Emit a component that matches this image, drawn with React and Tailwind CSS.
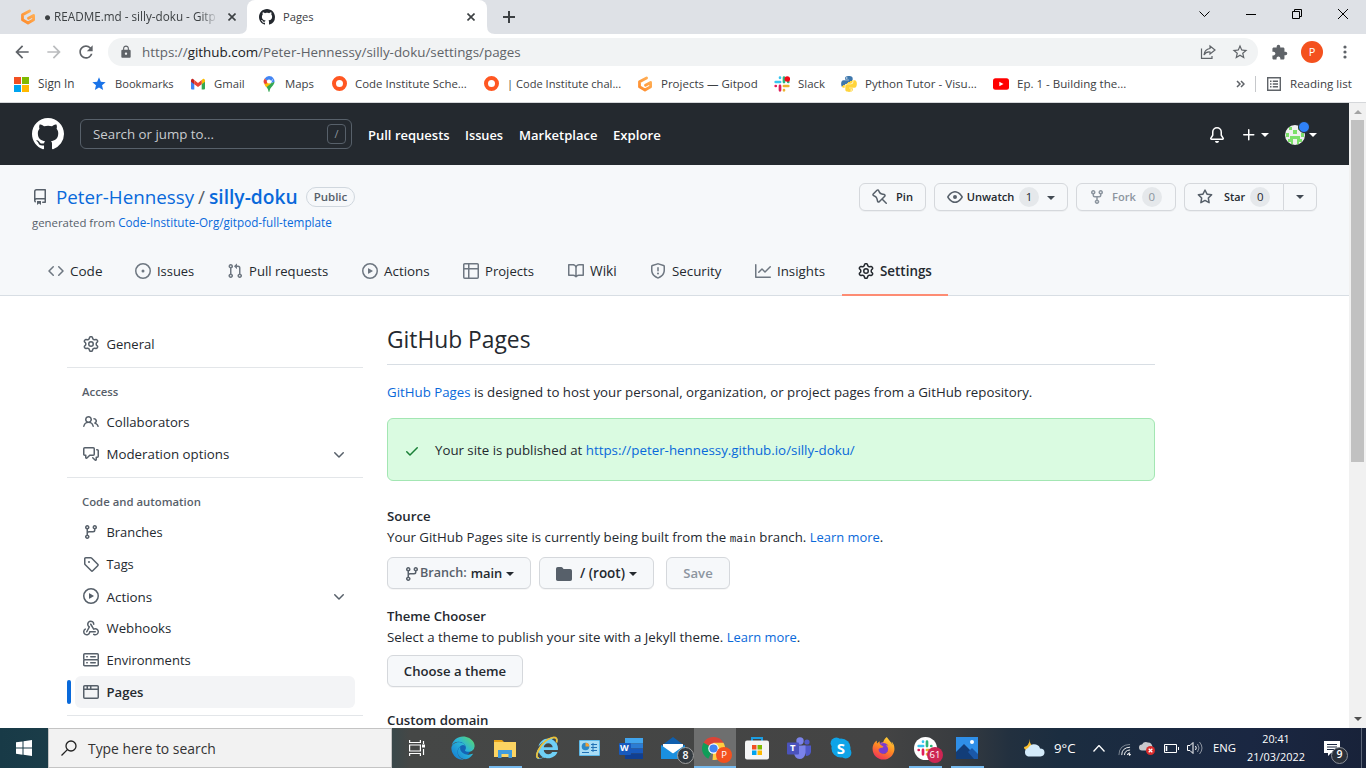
import { FaPython, FaFirefoxBrowser, FaInternetExplorer, FaEdge } from "react-icons/fa";
import { MdExtension, MdLock, MdRefresh, MdStar, MdStarBorder, MdArrowBack, MdArrowForward } from "react-icons/md";

const ICONS = {
  code: ["M4.72 3.22a.75.75 0 011.06 1.06L2.06 8l3.72 3.72a.75.75 0 11-1.06 1.06L.47 8.53a.75.75 0 010-1.06l4.25-4.25zm6.56 0a.75.75 0 10-1.06 1.06L13.94 8l-3.72 3.72a.75.75 0 101.06 1.06l4.25-4.25a.75.75 0 000-1.06l-4.25-4.25z"],
  issue: ["M8 9.5a1.5 1.5 0 100-3 1.5 1.5 0 000 3z", "M8 0a8 8 0 100 16A8 8 0 008 0zM1.5 8a6.5 6.5 0 1113 0 6.5 6.5 0 01-13 0z"],
  pull: ["M7.177 3.073L9.573.677A.25.25 0 0110 .854v4.792a.25.25 0 01-.427.177L7.177 3.427a.25.25 0 010-.354zM3.75 2.5a.75.75 0 100 1.5.75.75 0 000-1.5zm-2.25.75a2.25 2.25 0 113 2.122v5.256a2.251 2.251 0 11-1.5 0V5.372A2.25 2.25 0 011.5 3.25zM11 2.5h-1V4h1a1 1 0 011 1v5.628a2.251 2.251 0 101.5 0V5A2.5 2.5 0 0011 2.5zm1 10.25a.75.75 0 111.5 0 .75.75 0 01-1.5 0zM3.75 12a.75.75 0 100 1.5.75.75 0 000-1.5z"],
  play: ["M1.5 8a6.5 6.5 0 1113 0 6.5 6.5 0 01-13 0zM8 0a8 8 0 100 16A8 8 0 008 0zM6.379 5.227A.25.25 0 006 5.442v5.117a.25.25 0 00.379.214l4.264-2.559a.25.25 0 000-.428L6.379 5.227z"],
  table: ["M0 1.75C0 .784.784 0 1.75 0h12.5C15.216 0 16 .784 16 1.75v12.5A1.75 1.75 0 0114.25 16H1.75A1.75 1.75 0 010 14.25V1.75zM1.5 6.5v7.75c0 .138.112.25.25.25H5v-8H1.5zM5 5H1.5V1.75a.25.25 0 01.25-.25H5V5zm1.5 1.5v8h7.75a.25.25 0 00.25-.25V6.5h-8zm8-1.5h-8V1.5h7.75a.25.25 0 01.25.25V5z"],
  book: ["M0 1.75A.75.75 0 01.75 1h4.253c1.227 0 2.317.59 3 1.501A3.744 3.744 0 0111.006 1h4.245a.75.75 0 01.75.75v10.5a.75.75 0 01-.75.75h-4.507a2.25 2.25 0 00-1.591.659l-.622.621a.75.75 0 01-1.06 0l-.622-.621A2.25 2.25 0 005.258 13H.75a.75.75 0 01-.75-.75V1.75zm8.755 3a2.25 2.25 0 012.25-2.25H14.5v9h-3.757c-.71 0-1.4.201-1.992.572l.004-7.322zm-1.504 7.324l.004-5.073-.002-2.253A2.25 2.25 0 005.003 2.5H1.5v9h3.757a3.75 3.75 0 011.994.574z"],
  shield: ["M7.467.133a1.75 1.75 0 011.066 0l5.25 1.68A1.75 1.75 0 0115 3.48V7c0 1.566-.32 3.182-1.303 4.682-.983 1.498-2.585 2.813-5.032 3.855a1.7 1.7 0 01-1.33 0c-2.447-1.042-4.049-2.357-5.032-3.855C1.32 10.182 1 8.566 1 7V3.48a1.75 1.75 0 011.217-1.667l5.25-1.68zm.61 1.429a.25.25 0 00-.153 0l-5.25 1.68a.25.25 0 00-.174.238V7c0 1.358.275 2.666 1.057 3.86.784 1.194 2.121 2.34 4.366 3.297a.2.2 0 00.154 0c2.245-.956 3.582-2.104 4.366-3.298C13.225 9.666 13.5 8.36 13.5 7V3.48a.25.25 0 00-.174-.237l-5.25-1.68zM9 10.5a1 1 0 11-2 0 1 1 0 012 0zm-.25-5.75a.75.75 0 10-1.5 0v3a.75.75 0 001.5 0v-3z"],
  graph: ["M1.5 1.75a.75.75 0 00-1.5 0v12.5c0 .414.336.75.75.75h14.5a.75.75 0 000-1.5H1.5V1.75zm14.28 2.53a.75.75 0 00-1.06-1.06L10 7.94 7.53 5.47a.75.75 0 00-1.06 0L3.22 8.72a.75.75 0 001.06 1.06L7 7.06l2.47 2.47a.75.75 0 001.06 0l5.25-5.25z"],
  gear: ["M7.429 1.525a6.593 6.593 0 011.142 0c.036.003.108.036.137.146l.289 1.105c.147.56.55.967.997 1.189.174.086.341.183.501.29.417.278.97.423 1.53.27l1.102-.303c.11-.03.175.016.195.046.219.31.41.641.573.989.014.031.022.11-.059.19l-.815.806c-.411.406-.562.957-.53 1.456a4.588 4.588 0 010 .582c-.032.499.119 1.05.53 1.456l.815.806c.08.08.073.159.059.19a6.494 6.494 0 01-.573.99c-.02.029-.086.074-.195.045l-1.103-.303c-.559-.153-1.112-.008-1.529.27-.16.107-.327.204-.5.29-.449.222-.851.628-.998 1.189l-.289 1.105c-.029.11-.101.143-.137.146a6.613 6.613 0 01-1.142 0c-.036-.003-.108-.037-.137-.146l-.289-1.105c-.147-.56-.55-.967-.997-1.189a4.502 4.502 0 01-.501-.29c-.417-.278-.97-.423-1.53-.27l-1.102.303c-.11.03-.175-.016-.195-.046a6.492 6.492 0 01-.573-.989c-.014-.031-.022-.11.059-.19l.815-.806c.411-.406.562-.957.53-1.456a4.587 4.587 0 010-.582c.032-.499-.119-1.05-.53-1.456l-.815-.806c-.08-.08-.073-.159-.059-.19a6.44 6.44 0 01.573-.99c.02-.029.086-.075.195-.045l1.103.303c.559.153 1.112.008 1.529-.27.16-.107.327-.204.5-.29.449-.222.851-.628.998-1.189l.289-1.105c.029-.11.101-.143.137-.146zM8 0c-.236 0-.47.01-.701.03-.743.065-1.29.615-1.458 1.261l-.29 1.106c-.017.066-.078.158-.211.224a5.994 5.994 0 00-.668.386c-.123.082-.233.09-.3.071L3.27 2.776c-.644-.177-1.392.02-1.82.63a7.977 7.977 0 00-.704 1.217c-.315.675-.111 1.422.363 1.891l.815.806c.05.048.098.147.088.294a6.084 6.084 0 000 .772c.01.147-.038.246-.088.294l-.815.806c-.474.469-.678 1.216-.363 1.891.2.428.436.835.704 1.218.428.609 1.176.806 1.82.63l1.103-.303c.066-.019.176-.011.299.071.213.143.436.272.668.386.133.066.194.158.212.224l.289 1.106c.169.646.715 1.196 1.458 1.26a8.094 8.094 0 001.402 0c.743-.064 1.29-.614 1.458-1.26l.29-1.106c.017-.066.078-.158.211-.224a5.98 5.98 0 00.668-.386c.123-.082.233-.09.3-.071l1.102.302c.644.177 1.392-.02 1.82-.63.268-.382.505-.789.704-1.217.315-.675.111-1.422-.364-1.891l-.814-.806c-.05-.048-.098-.147-.088-.294a6.1 6.1 0 000-.772c-.01-.147.039-.246.088-.294l.814-.806c.475-.469.679-1.216.364-1.891a7.992 7.992 0 00-.704-1.218c-.428-.609-1.176-.806-1.82-.63l-1.103.303c-.066.019-.176.011-.299-.071a5.991 5.991 0 00-.668-.386c-.133-.066-.194-.158-.212-.224L10.16 1.29C9.99.645 9.444.095 8.701.031A8.094 8.094 0 008 0zm1.5 8a1.5 1.5 0 11-3 0 1.5 1.5 0 013 0zM11 8a3 3 0 11-6 0 3 3 0 016 0z"],
  repo: ["M2 2.5A2.5 2.5 0 014.5 0h8.75a.75.75 0 01.75.75v12.5a.75.75 0 01-.75.75h-2.5a.75.75 0 110-1.5h1.75v-2h-8a1 1 0 00-.714 1.7.75.75 0 01-1.072 1.05A2.495 2.495 0 012 11.5v-9zm10.5-1V9h-8c-.356 0-.694.074-1 .208V2.5a1 1 0 011-1h8zM5 12.25v3.25a.25.25 0 00.4.2l1.45-1.087a.25.25 0 01.3 0L8.6 15.7a.25.25 0 00.4-.2v-3.25a.25.25 0 00-.25-.25h-3.5a.25.25 0 00-.25.25z"],
  github: ["M8 0C3.58 0 0 3.58 0 8c0 3.54 2.29 6.53 5.47 7.59.4.07.55-.17.55-.38 0-.19-.01-.82-.01-1.49-2.01.37-2.53-.49-2.69-.94-.09-.23-.48-.94-.82-1.13-.28-.15-.68-.52-.01-.53.63-.01 1.08.58 1.23.82.72 1.21 1.87.87 2.33.66.07-.52.28-.87.51-1.07-1.78-.2-3.64-.89-3.64-3.95 0-.87.31-1.59.82-2.15-.08-.2-.36-1.02.08-2.12 0 0 .67-.21 2.2.82.64-.18 1.32-.27 2-.27.68 0 1.36.09 2 .27 1.53-1.04 2.2-.82 2.2-.82.44 1.1.16 1.92.08 2.12.51.56.82 1.27.82 2.15 0 3.07-1.87 3.75-3.65 3.95.29.25.54.73.54 1.48 0 1.07-.01 1.93-.01 2.2 0 .21.15.46.55.38A8.013 8.013 0 0016 8c0-4.42-3.58-8-8-8z"],
  eye: ["M1.679 7.932c.412-.621 1.242-1.75 2.366-2.717C5.175 4.242 6.527 3.5 8 3.5c1.473 0 2.824.742 3.955 1.715 1.124.967 1.954 2.096 2.366 2.717a.119.119 0 010 .136c-.412.621-1.242 1.75-2.366 2.717C10.825 11.758 9.473 12.5 8 12.5c-1.473 0-2.824-.742-3.955-1.715C2.92 9.818 2.09 8.69 1.679 8.068a.119.119 0 010-.136zM8 2c-1.981 0-3.67.992-4.933 2.078C1.797 5.169.88 6.423.43 7.1a1.619 1.619 0 000 1.798c.45.678 1.367 1.932 2.637 3.024C4.329 13.008 6.019 14 8 14c1.981 0 3.67-.992 4.933-2.078 1.27-1.091 2.187-2.345 2.637-3.023a1.619 1.619 0 000-1.798c-.45-.678-1.367-1.932-2.637-3.023C11.671 2.992 9.981 2 8 2zm0 8a2 2 0 100-4 2 2 0 000 4z"],
  fork: ["M5 3.25a.75.75 0 11-1.5 0 .75.75 0 011.5 0zm0 2.122a2.25 2.25 0 10-1.5 0v.878A2.25 2.25 0 005.75 8.5h1.5v2.128a2.251 2.251 0 101.5 0V8.5h1.5a2.25 2.25 0 002.25-2.25v-.878a2.25 2.25 0 10-1.5 0v.878a.75.75 0 01-.75.75h-4.5A.75.75 0 015 6.25v-.878zm3.75 7.378a.75.75 0 11-1.5 0 .75.75 0 011.5 0zm3-8.75a.75.75 0 100-1.5.75.75 0 000 1.5z"],
  star: ["M8 .25a.75.75 0 01.673.418l1.882 3.815 4.21.612a.75.75 0 01.416 1.279l-3.046 2.97.719 4.192a.75.75 0 01-1.088.791L8 12.347l-3.766 1.98a.75.75 0 01-1.088-.79l.72-4.194L.818 6.374a.75.75 0 01.416-1.28l4.21-.611L7.327.668A.75.75 0 018 .25zm0 2.445L6.615 5.5a.75.75 0 01-.564.41l-3.097.45 2.24 2.184a.75.75 0 01.216.664l-.528 3.084 2.769-1.456a.75.75 0 01.698 0l2.77 1.456-.53-3.084a.75.75 0 01.216-.664l2.24-2.183-3.096-.45a.75.75 0 01-.564-.41L8 2.694v.001z"],
  pin: ["M4.456.734a1.75 1.75 0 012.826.504l.613 1.327a3.081 3.081 0 002.084 1.707l2.454.584c1.332.317 1.8 1.972.832 2.94L11.06 10l3.72 3.72a.75.75 0 11-1.061 1.06L10 11.06l-2.204 2.205c-.968.968-2.623.5-2.94-.832l-.584-2.454a3.081 3.081 0 00-1.707-2.084l-1.327-.613a1.75 1.75 0 01-.504-2.826L4.456.734zM5.92 1.866a.25.25 0 00-.404-.072L1.794 5.516a.25.25 0 00.072.404l1.328.613A4.582 4.582 0 015.73 9.63l.584 2.454a.25.25 0 00.42.12l5.47-5.47a.25.25 0 00-.12-.42L9.63 5.73a4.581 4.581 0 01-3.098-2.537L5.92 1.866z"],
  bell: ["M8 16a2 2 0 001.985-1.75c.017-.137-.097-.25-.235-.25h-3.5c-.138 0-.252.113-.235.25A2 2 0 008 16z", "M8 1.5A3.5 3.5 0 004.5 5v2.947c0 .346-.102.683-.294.97l-1.703 2.556a.018.018 0 00-.003.01l.001.006c0 .002.002.004.004.006a.017.017 0 00.006.004l.007.001h10.964l.007-.001a.016.016 0 00.006-.004.016.016 0 00.004-.006l.001-.007a.017.017 0 00-.003-.01l-1.703-2.554a1.75 1.75 0 01-.294-.97V5A3.5 3.5 0 008 1.5zM3 5a5 5 0 0110 0v2.947c0 .05.015.098.042.139l1.703 2.555A1.518 1.518 0 0113.482 13H2.518a1.518 1.518 0 01-1.263-2.36l1.703-2.554A.25.25 0 003 7.947V5z"],
  plus: ["M7.75 2a.75.75 0 01.75.75V7h4.25a.75.75 0 110 1.5H8.5v4.25a.75.75 0 11-1.5 0V8.5H2.75a.75.75 0 010-1.5H7V2.75A.75.75 0 017.75 2z"],
  people: ["M5.5 3.5a2 2 0 100 4 2 2 0 000-4zM2 5.5a3.5 3.5 0 115.898 2.549 5.507 5.507 0 013.034 4.084.75.75 0 11-1.482.235 4.001 4.001 0 00-7.9 0 .75.75 0 01-1.482-.236A5.507 5.507 0 013.102 8.05 3.49 3.49 0 012 5.5zM11 4a.75.75 0 100 1.5 1.5 1.5 0 01.666 2.844.75.75 0 00-.416.672v.352a.75.75 0 00.574.73c1.2.289 2.162 1.2 2.522 2.372a.75.75 0 101.434-.44 5.01 5.01 0 00-2.56-3.012A3 3 0 0011 4z"],
  discussion: ["M1.5 2.75a.25.25 0 01.25-.25h8.5a.25.25 0 01.25.25v5.5a.25.25 0 01-.25.25h-3.5a.75.75 0 00-.53.22L3.5 11.44V9.25a.75.75 0 00-.75-.75h-1a.25.25 0 01-.25-.25v-5.5zM1.75 1A1.75 1.75 0 000 2.75v5.5C0 9.216.784 10 1.75 10H2v1.543a1.457 1.457 0 002.487 1.03L7.061 10h3.189A1.75 1.75 0 0012 8.25v-5.5A1.75 1.75 0 0010.25 1h-8.5zM14.5 4.75a.25.25 0 00-.25-.25h-.5a.75.75 0 110-1.5h.5c.966 0 1.75.784 1.75 1.75v5.5A1.75 1.75 0 0114.25 12H14v1.543a1.457 1.457 0 01-2.487 1.03L9.22 12.28a.75.75 0 111.06-1.06l2.22 2.22v-2.19a.75.75 0 01.75-.75h1a.25.25 0 00.25-.25v-5.5z"],
  branch: ["M11.75 2.5a.75.75 0 100 1.5.75.75 0 000-1.5zm-2.25.75a2.25 2.25 0 113 2.122V6A2.5 2.5 0 0110 8.5H6a1 1 0 00-1 1v1.128a2.251 2.251 0 11-1.5 0V5.372a2.25 2.25 0 111.5 0v1.836A2.492 2.492 0 016 7h4a1 1 0 001-1v-.628A2.25 2.25 0 019.5 3.25zM4.25 12a.75.75 0 100 1.5.75.75 0 000-1.5zM3.5 3.25a.75.75 0 111.5 0 .75.75 0 01-1.5 0z"],
  tag: ["M2.5 7.775V2.75a.25.25 0 01.25-.25h5.025a.25.25 0 01.177.073l6.25 6.25a.25.25 0 010 .354l-5.025 5.025a.25.25 0 01-.354 0l-6.25-6.25a.25.25 0 01-.073-.177zm-1.5 0V2.75C1 1.784 1.784 1 2.75 1h5.025c.464 0 .91.184 1.238.513l6.25 6.25a1.75 1.75 0 010 2.474l-5.026 5.026a1.75 1.75 0 01-2.474 0l-6.25-6.25A1.75 1.75 0 011 7.775zM6 5a1 1 0 100 2 1 1 0 000-2z"],
  webhook: ["M5.5 4.25a2.25 2.25 0 014.5 0 .75.75 0 001.5 0 3.75 3.75 0 10-6.14 2.889l-2.272 4.258a.75.75 0 001.324.706L7 7.25a.75.75 0 00-.309-1.015A2.25 2.25 0 015.5 4.25z", "M7.364 3.607a.75.75 0 011.03.257l2.608 4.349a3.75 3.75 0 11-.628 6.785.75.75 0 01.752-1.299 2.25 2.25 0 10-.033-3.88.75.75 0 01-1.03-.256L7.107 4.636a.75.75 0 01.257-1.03z", "M2.9 8.776A.75.75 0 012.625 9.8 2.25 2.25 0 106 11.75a.75.75 0 01.75-.751h5.5a.75.75 0 010 1.5H7.425a3.75 3.75 0 11-5.55-3.998.75.75 0 011.024.274z"],
  server: ["M1.75 1A1.75 1.75 0 000 2.75v4c0 .372.116.717.314 1a1.742 1.742 0 00-.314 1v4c0 .966.784 1.75 1.75 1.75h12.5A1.75 1.75 0 0016 12.75v-4c0-.372-.116-.717-.314-1 .198-.283.314-.628.314-1v-4A1.75 1.75 0 0014.25 1H1.75zm0 7.5a.25.25 0 00-.25.25v4c0 .138.112.25.25.25h12.5a.25.25 0 00.25-.25v-4a.25.25 0 00-.25-.25H1.75zM1.5 2.75a.25.25 0 01.25-.25h12.5a.25.25 0 01.25.25v4a.25.25 0 01-.25.25H1.75a.25.25 0 01-.25-.25v-4zm5.5 2A.75.75 0 017.75 4h4.5a.75.75 0 010 1.5h-4.5A.75.75 0 017 4.75zM7.75 10a.75.75 0 000 1.5h4.5a.75.75 0 000-1.5h-4.5zM3 4.75A.75.75 0 013.75 4h.5a.75.75 0 010 1.5h-.5A.75.75 0 013 4.75zM3.75 10a.75.75 0 000 1.5h.5a.75.75 0 000-1.5h-.5z"],
  browser: ["M0 2.75C0 1.784.784 1 1.75 1h12.5c.966 0 1.75.784 1.75 1.75v10.5A1.75 1.75 0 0114.25 15H1.75A1.75 1.75 0 010 13.25V2.75zm1.75-.25a.25.25 0 00-.25.25V4.5h2v-2H1.75zM5 2.5v2h2v-2H5zm3.5 0v2h6V2.75a.25.25 0 00-.25-.25H8.5zm6 3.5h-13v7.25c0 .138.112.25.25.25h12.5a.25.25 0 00.25-.25V6z"],
  check: ["M13.78 4.22a.75.75 0 010 1.06l-7.25 7.25a.75.75 0 01-1.06 0L2.22 9.28a.75.75 0 011.06-1.06L6 10.94l6.72-6.72a.75.75 0 011.06 0z"],
  chevron: ["M12.78 6.22a.75.75 0 010 1.06l-4.25 4.25a.75.75 0 01-1.06 0L3.22 7.28a.75.75 0 011.06-1.06L8 9.94l3.72-3.72a.75.75 0 011.06 0z"],
  folder: ["M1.75 1A1.75 1.75 0 000 2.75v10.5C0 14.216.784 15 1.75 15h12.5A1.75 1.75 0 0016 13.25v-8.5A1.75 1.75 0 0014.25 3h-6.5a.25.25 0 01-.2-.1l-.9-1.2c-.33-.44-.85-.7-1.4-.7h-3.5z"],
};

function Icon({ name, className = "size-4" }) {
  return (
    <svg viewBox="0 0 16 16" fill="currentColor" fillRule="evenodd" className={"shrink-0 " + className}>
      {ICONS[name].map((d) => (
        <path key={d} d={d} />
      ))}
    </svg>
  );
}

function Caret({ className = "" }) {
  return (
    <svg viewBox="0 0 8 4" fill="currentColor" className={"h-1 w-2 shrink-0 " + className}>
      <path d="M0 0h8L4 4z" />
    </svg>
  );
}

function GitpodLogo() {
  return (
    <svg viewBox="0 0 16 16" className="size-4 shrink-0" fill="none" strokeLinejoin="round" strokeLinecap="round">
      <defs>
        <linearGradient id="gitpod" x1="1" y1="0" x2="0" y2="1">
          <stop offset="0" stopColor="#ffb45b" />
          <stop offset="1" stopColor="#ff8a2a" />
        </linearGradient>
      </defs>
      <path d="M9.600 1.900 2.500 5.700v5L8 14l5.600-3.300V6.500L8.500 9.300" stroke="url(#gitpod)" strokeWidth="2.800" />
    </svg>
  );
}

function SlackLogo({ dot }) {
  return (
    <svg viewBox="0 0 16 16" className="size-4 shrink-0" strokeWidth="2.700" strokeLinecap="round" fill="none">
      <path d="M6 1.700v.1M1.700 6h4.400" stroke="#36c5f0" />
      <path d="M14.300 6h-.1M10 1.700v4.400" stroke="#2eb67d" />
      <path d="M10 14.300v-.1M14.300 10H9.900" stroke="#ecb22e" />
      <path d="M1.700 10h.1M6 14.300V9.900" stroke="#e01e5a" />
      {dot && <circle cx="13.300" cy="3" r="2.800" fill="#f30a18" />}
    </svg>
  );
}

const Ring = () => <span className="ml-px size-[15px] shrink-0 rounded-full border-4 border-[#ff5722]" />;

function PythonLogo() {
  return (
    <>
      <svg className="absolute size-0">
        <linearGradient id="python" x1="0" y1="0" x2="0.6" y2="1">
          <stop offset="0.5" stopColor="#3f78ad" />
          <stop offset="0.5" stopColor="#ffd43b" />
        </linearGradient>
      </svg>
      <FaPython className="-ml-px size-[18px] shrink-0 fill-[url(#python)]" />
    </>
  );
}

const MicrosoftLogo = () => (
  <svg viewBox="0 0 15 15" className="size-[15px] shrink-0">
    <path fill="#f25022" d="M0 0h7v7H0z" />
    <path fill="#7fba00" d="M8 0h7v7H8z" />
    <path fill="#00a4ef" d="M0 8h7v7H0z" />
    <path fill="#ffb900" d="M8 8h7v7H8z" />
  </svg>
);

const GmailLogo = () => (
  <svg viewBox="0 0 16 16" className="size-4 shrink-0">
    <path fill="#4285f4" d="M1 4v8.500q0 1 1 1h2.300V6z" />
    <path fill="#34a853" d="M15 4v8.500q0 1-1 1h-2.300V6z" />
    <path fill="#c5221f" d="M1 4.200q.1-1.700 1.800-1.500L4.300 4v4.200L1 5.800z" />
    <path fill="#fbbc04" d="M15 4.200q-.1-1.700-1.800-1.500L11.700 4v4.200L15 5.800z" />
    <path fill="#ea4335" d="m4.300 4 3.700 2.900L11.700 4v4.200L8 11 4.300 8.200z" />
  </svg>
);

const MapsLogo = () => (
  <svg viewBox="0 0 16 16" className="size-4 shrink-0">
    <path fill="#34a853" d="M13.500 5.600c0 4.200-4.300 4.900-5 9.900q-.5.900-1 0C7.200 13 6 11.700 4.700 10z" />
    <path fill="#fbbc04" d="m3.300 8 2.500-3 3.900 2.800-4.300 3.400Q4 9.700 3.300 8z" />
    <path fill="#ea4335" d="M3.700 2.400 7 5.200 5.200 8 3 7.400Q1.800 4.600 3.700 2.400z" />
    <path fill="#4285f4" d="M8 0q3 .1 4.500 2.300L9.300 6 5.800 4.500 3.700 2.400Q5.400.1 8 0z" />
    <path fill="#4285f4" d="M12.500 2.300q1.100 1.600 1 3.500L10 7z" />
    <circle cx="8" cy="5.500" r="2.100" fill="#fff" />
  </svg>
);

const YoutubeLogo = () => (
  <svg viewBox="0 0 16 16" className="size-4 shrink-0">
    <rect y="2.300" width="16" height="11.400" rx="2.500" fill="#f00" />
    <path d="M6.300 5.700v4.600L10.500 8z" fill="#fff" />
  </svg>
);

const bookmarks = [
  { label: "Sign In", icon: <MicrosoftLogo />, box: "w-[77px]", text: "text-[11.75px]" },
  { label: "Bookmarks", icon: <MdStar className="size-4 shrink-0 text-[#1a73e8]" />, box: "w-[99px]", text: "text-[11.15px]" },
  { label: "Gmail", icon: <GmailLogo />, box: "w-[71px]", text: "text-[11.3px]" },
  { label: "Maps", icon: <MapsLogo />, box: "w-[70px]", text: "text-[11.4px]" },
  { label: "Code Institute Sche...", icon: <Ring />, box: "w-[152px]", text: "text-[11.45px]" },
  { label: "| Code Institute chal...", icon: <Ring />, box: "w-[154px]", text: "text-[11.1px]" },
  { label: "Projects — Gitpod", icon: <GitpodLogo />, box: "w-[137px]", text: "text-[11.5px]" },
  { label: "Slack", icon: <SlackLogo dot />, box: "w-[67px]", text: "text-[11.45px]" },
  { label: "Python Tutor - Visu...", icon: <PythonLogo />, box: "w-[152px]", text: "text-[11.6px]" },
  { label: "Ep. 1 - Building the...", icon: <YoutubeLogo />, box: "w-[160px]", text: "text-[11.55px]" },
];

function CloseX({ className = "" }) {
  return (
    <svg viewBox="0 0 8 8" className={"size-2 shrink-0 " + className} stroke="#3c4043" strokeWidth="1.600">
      <path d="m.5.5 7 7m0-7-7 7" />
    </svg>
  );
}

function TabStrip() {
  return (
    <div className="flex h-[34px] bg-[#dee1e6] text-[#3c4043]">
      <div className="flex w-[247px] items-center pl-5">
        <GitpodLogo />
        <span className="ml-2 w-[174px] overflow-hidden text-[11.7px] whitespace-nowrap [mask-image:linear-gradient(to_right,black_90%,transparent)]">● README.md - silly-doku - Gitp</span>
        <CloseX className="ml-[10px]" />
      </div>
      <div className="relative flex w-[240px] items-center rounded-t-lg bg-white pl-3">
        <Icon name="github" className="size-4 text-[#24292f]" />
        <span className="ml-2 text-[11.2px]">Pages</span>
        <CloseX className="mr-3 ml-auto" />
        <svg viewBox="0 0 8 8" className="absolute bottom-0 -left-2 size-2 fill-white"><path d="M8 0v8H0q8 0 8-8z" /></svg>
        <svg viewBox="0 0 8 8" className="absolute -right-2 bottom-0 size-2 fill-white"><path d="M0 0v8h8Q0 8 0 0z" /></svg>
      </div>
      <svg viewBox="0 0 12 12" className="mt-[11px] ml-4 size-3" stroke="#3c4043" strokeWidth="2"><path d="M6 0v12M0 6h12" /></svg>
      <div className="mr-[18px] ml-auto flex h-7 items-center gap-9 text-black">
        <svg viewBox="0 0 11 6" className="h-1.5 w-[11px]" fill="none" stroke="currentColor"><path d="m.5.5 5 5 5-5" /></svg>
        <svg viewBox="0 0 10 10" className="size-2.5" stroke="currentColor"><path d="M0 5.500h10" /></svg>
        <svg viewBox="0 0 10 10" className="size-2.5" fill="none" stroke="currentColor"><path d="M.5 2.500h7v7h-7zM2.500 2.500v-2h7v7h-2" /></svg>
        <svg viewBox="0 0 10 10" className="size-2.5" fill="none" stroke="currentColor"><path d="m0 0 10 10M10 0 0 10" /></svg>
      </div>
    </div>
  );
}

function Toolbar() {
  return (
    <div className="flex h-9 items-center bg-white text-[#5f6368]">
      <MdArrowBack className="ml-3 size-5" />
      <MdArrowForward className="ml-3 size-5 text-[#babcbe]" />
      <MdRefresh className="ml-3 size-5" />
      <div className="ml-3 flex h-7 w-[1150px] items-center rounded-full bg-[#f1f3f4] pr-[9px] pl-[11px]">
        <MdLock className="size-3.5" />
        <span className="ml-[9px] text-[13.4px] whitespace-nowrap">
          https://<span className="text-[#202124]">github.com</span>/Peter-Hennessy/silly-doku/settings/pages
        </span>
        <svg viewBox="0 0 16 16" className="ml-auto size-4" fill="none" stroke="currentColor" strokeWidth="1.200">
          <path d="M1.500 4.500v9.800H12V12M10 2l5 4-5 4V8Q6 7.500 4 11q.3-5.500 6-6.500z" />
        </svg>
        <MdStarBorder className="ml-[15px] size-[18px]" />
      </div>
      <MdExtension className="ml-[13px] size-[17px]" />
      <span className="ml-[13px] flex size-[22px] items-center justify-center rounded-full bg-[#f4511e] text-[11px] text-white">P</span>
      <svg viewBox="0 0 4 16" className="ml-[20px] h-4 w-1" fill="currentColor">
        <circle cx="2" cy="3" r="1.600" /><circle cx="2" cy="8" r="1.600" /><circle cx="2" cy="13" r="1.600" />
      </svg>
    </div>
  );
}

function BookmarkBar() {
  return (
    <div className="flex h-[33px] items-center border-b border-[#d5d7da] bg-white pb-1 pl-[14px] text-[#3c4043]">
      {bookmarks.map((b) => (
        <div key={b.label} className={"flex shrink-0 items-center " + b.box}>
          <span className="flex w-6 shrink-0 items-center">{b.icon}</span>
          <span className={"whitespace-nowrap " + b.text}>{b.label}</span>
        </div>
      ))}
      <svg viewBox="0 0 9 8" className="ml-[83px] h-2 w-[9px]" fill="none" stroke="#5f6368" strokeWidth="1.500"><path d="m1 1 3 3-3 3m4-6 3 3-3 3" /></svg>
      <span className="ml-2.5 h-4 w-px bg-[#c6c8cb]" />
      <svg viewBox="0 0 14 14" className="ml-[11px] size-[14px]" fill="none" stroke="#5f6368" strokeWidth="1.400">
        <path d="M.7.7h12.600v12.600H.7zM3 4.300h1.500M5.800 4.300H11M3 7h1.500M5.800 7H11M3 9.700h1.500M5.800 9.700H11" />
      </svg>
      <span className="ml-[9px] text-[11.55px] whitespace-nowrap">Reading list</span>
    </div>
  );
}

function GlobalHeader() {
  return (
    <header className="flex h-[62px] shrink-0 items-center bg-[#24292f] pl-8 text-[13px] font-semibold text-white">
      <Icon name="github" className="size-8" />
      <div className="ml-4 flex h-[30px] w-[272px] items-center rounded-md border border-[#57606a] pr-[5px] pl-3 text-[13.3px] font-normal text-[#c9cccf]">
        <span className="pt-0.5">Search or jump to...</span>
        <span className="ml-auto flex h-5 w-[19px] items-center justify-center rounded border border-[#57606a] text-[11px] text-[#8b949e]">/</span>
      </div>
      <div className="flex flex-1 items-center pt-[3px]">
        <span className="ml-4 w-[97px]">Pull requests</span>
        <span className="w-[54px] text-[12.8px]">Issues</span>
        <span className="w-[94px]">Marketplace</span>
        <span className="text-[13.2px]">Explore</span>
      </div>
      <div className="flex items-center pt-0.5">
        <Icon name="bell" className="mr-4 size-4" />
        <Icon name="plus" className="size-4" />
        <Caret className="mr-4 ml-1" />
        <div className="relative">
          <svg viewBox="0 0 20 20" className="size-5">
            <clipPath id="avatar"><circle cx="10" cy="10" r="10" /></clipPath>
            <g clipPath="url(#avatar)">
              <path fill="#f0f0f0" d="M0 0h20v20H0z" />
              <path fill="#7de06b" d="M4 2h3v3H4zM8 5h4v4H8zM13 2h3v3h-3zM1 8h3v4H1zM16 8h3v4h-3zM5 11h10v3H5zM3 14h5v3H3zM12 14h5v3h-5zM6 17h2v3H6zM12 17h2v3h-2z" />
            </g>
          </svg>
          <span className="absolute -top-[4px] -right-[5px] size-3 rounded-full border border-[#24292f] bg-[#2f81f7]" />
        </div>
        <Caret className="mr-8 ml-1" />
      </div>
    </header>
  );
}

const Counter = ({ children }) => (
  <span className="flex h-5 w-5 items-center justify-center rounded-full bg-[#e5e8eb] text-[11.4px] font-normal">{children}</span>
);

function HeaderButton({ className, children }) {
  return (
    <button className={"flex h-7 shrink-0 items-center border border-[#d5d8dc] bg-[#f6f8fa] text-[11.1px] font-semibold shadow-[0_1px_0_rgba(27,31,36,0.04)] " + className}>{children}</button>
  );
}

const repoTabs = [
  { label: "Code", icon: "code", box: "w-[87px]", text: "text-[13.5px]" },
  { label: "Issues", icon: "issue", box: "w-[92px]", text: "text-[12.9px]" },
  { label: "Pull requests", icon: "pull", box: "w-[135px]", text: "text-[13.1px]" },
  { label: "Actions", icon: "play", box: "w-[101px]", text: "text-[13.4px]" },
  { label: "Projects", icon: "table", box: "w-[105px]", text: "text-[13.1px]" },
  { label: "Wiki", icon: "book", box: "w-[82px]", text: "text-[13.7px]" },
  { label: "Security", icon: "shield", box: "w-[105px]", text: "text-[13.3px]" },
  { label: "Insights", icon: "graph", box: "w-[103px]", text: "text-[13.3px]" },
];

function RepoHeader() {
  return (
    <div className="flex h-[131px] shrink-0 flex-col border-b border-[#d8dee4] bg-[#f6f8fa]">
      <div className="flex h-[78px] shrink-0 justify-between pr-8 pl-8">
        <div className="pt-4">
          <div className="flex h-8 items-center text-[#57606a]">
            <Icon name="repo" />
            <span className="ml-2 w-[138px] text-[18.8px] whitespace-nowrap text-[#0969da]">Peter-Hennessy</span>
            <span className="mx-1 text-[19px]">/</span>
            <span className="w-[89px] text-[19.2px] font-semibold whitespace-nowrap text-[#0969da]">silly-doku</span>
            <span className="ml-2 flex h-5 w-[49px] items-center justify-center rounded-full border border-[#d0d7de] text-[11.5px] font-semibold">Public</span>
          </div>
          <div className="flex h-5 items-center gap-[3px] text-[11.4px] text-[#57606a]">
            generated from<span className="text-[11.7px] text-[#0969da]">Code-Institute-Org/gitpod-full-template</span>
          </div>
        </div>
        <div className="flex gap-2 pt-[18px] text-[#24292f]">
          <HeaderButton className="w-[67px] rounded-md pl-3">
            <Icon name="pin" className="size-4 text-[#57606a]" />
            <span className="ml-2">Pin</span>
          </HeaderButton>
          <HeaderButton className="w-[134px] rounded-md pl-3">
            <Icon name="eye" className="size-4 text-[#57606a]" />
            <span className="mr-1 ml-[3px] w-[49px]">Unwatch</span>
            <Counter>1</Counter>
            <Caret className="mt-0.5 ml-2 text-[#424a53]" />
          </HeaderButton>
          <HeaderButton className="w-[100px] rounded-md pl-3 text-[#8c959f]">
            <Icon name="fork" />
            <span className="mr-1.5 ml-[7px]">Fork</span>
            <Counter>0</Counter>
          </HeaderButton>
          <div className="flex">
            <HeaderButton className="w-[99px] rounded-l-md border-r-0 pl-3">
              <Icon name="star" className="size-4 text-[#57606a]" />
              <span className="mr-[5px] ml-[11px] text-[10.8px]">Star</span>
              <Counter>0</Counter>
            </HeaderButton>
            <HeaderButton className="w-[34px] justify-center rounded-r-md">
              <Caret className="text-[#424a53]" />
            </HeaderButton>
          </div>
        </div>
      </div>
      <nav className="flex flex-1 pl-12 text-[#24292f]">
        {repoTabs.map((t) => (
          <div key={t.label} className={"flex items-center pt-1 " + t.box}>
            <Icon name={t.icon} className="mr-1.5 size-4 text-[#6e7781]" />
            <span className={"pt-px whitespace-nowrap " + t.text}>{t.label}</span>
          </div>
        ))}
        <div className="-mb-px -ml-4 flex w-[106px] items-center border-b-2 border-[#fd8c73] pt-[5px] pl-4 font-semibold">
          <Icon name="gear" className="mr-1.5 size-4" />
          <span className="text-[13.4px]">Settings</span>
        </div>
      </nav>
    </div>
  );
}

const SideHeading = ({ children }) => (
  <div className="mt-2 flex h-[30px] items-center pt-0.5 pl-[15px] text-[11.35px] font-semibold text-[#57606a]">{children}</div>
);

function SideItem({ icon, text, expandable, active, children }) {
  return (
    <div className="flex h-8 items-center">
      <span className={"h-6 w-1 rounded-md " + (active ? "bg-[#0969da]" : "")} />
      <div className={"ml-1 flex h-full w-[280px] items-center rounded-md pr-2 pl-2 " + (active ? "bg-[#f3f4f6] font-semibold" : "")}>
        <Icon name={icon} className="mr-[7.5px] size-4 text-[#57606a]" />
        <span className={"pt-0.5 " + text}>{children}</span>
        {expandable && <Icon name="chevron" className="ml-auto size-4 text-[#57606a]" />}
      </div>
    </div>
  );
}

const Divider = () => <hr className="mt-[7px] h-px border-0 bg-[#e3e6e9]" />;

function Sidebar() {
  return (
    <aside className="w-[296px] shrink-0 pt-8 text-[#24292f]">
      <SideItem icon="gear" text="text-[13.05px]">General</SideItem>
      <Divider />
      <SideHeading>Access</SideHeading>
      <SideItem icon="people" text="text-[13.15px]">Collaborators</SideItem>
      <SideItem icon="discussion" text="text-[13.3px]" expandable>Moderation options</SideItem>
      <Divider />
      <SideHeading>Code and automation</SideHeading>
      <SideItem icon="branch" text="text-[12.9px]">Branches</SideItem>
      <SideItem icon="tag" text="text-[12.8px]">Tags</SideItem>
      <SideItem icon="play" text="text-[13.4px]" expandable>Actions</SideItem>
      <SideItem icon="webhook" text="text-[13.2px]">Webhooks</SideItem>
      <SideItem icon="server" text="text-[13px]">Environments</SideItem>
      <SideItem icon="browser" text="text-[13.15px]" active>Pages</SideItem>
      <Divider />
    </aside>
  );
}

function Button({ className, children }) {
  return (
    <button className={"flex h-8 items-center rounded-md border border-[#d5d8dc] bg-[#f6f8fa] pt-px text-[13.15px] font-semibold whitespace-nowrap shadow-[0_1px_0_rgba(27,31,36,0.04)] " + className}>{children}</button>
  );
}

function PagesSettings() {
  return (
    <main className="w-[768px] shrink-0 text-[13.25px] whitespace-nowrap text-[#24292f]">
      <h2 className="flex h-[69px] items-center border-b border-[#d8dee4] pt-5 text-[22.8px]">GitHub Pages</h2>
      <p className="mt-[17px] h-[21px] text-[13.28px] leading-[21px]">
        <span className="text-[#0969da]">GitHub Pages</span> is designed to host your personal, organization, or project pages from a GitHub repository.
      </p>
      <div className="mt-[15px] flex h-[63px] items-center rounded-md border border-[#a3e6b3] bg-[#dafbe1]">
        <Icon name="check" className="mt-0.5 ml-4 size-4 text-[#1a7f37]" />
        <span className="ml-[15px] pt-0.5">
          Your site is published at <span className="text-[13.35px] text-[#0969da]">https://peter-hennessy.github.io/silly-doku/</span>
        </span>
      </div>
      <h3 className="mt-[25px] h-[21px] leading-[21px] font-semibold">Source</h3>
      <p className="h-[21px] leading-[21px]">
        Your GitHub Pages site is currently being built from the <code className="font-['DejaVu_Sans_Mono'] text-[10.9px]">main</code> branch.{" "}
        <span className="text-[12.95px] text-[#0969da]">Learn more</span>.
      </p>
      <div className="mt-[9px] flex">
        <Button className="w-[144px] pl-4">
          <Icon name="branch" className="size-4 text-[#57606a]" />
          <span className="text-[12.6px] text-[#57606a]">Branch:</span>
          <span className="mr-1 ml-1 text-[12.9px]">main</span>
          <Caret />
        </Button>
        <Button className="ml-2 w-[115px] pl-4">
          <Icon name="folder" className="size-4 text-[#57606a]" />
          <span className="mr-1 ml-2 text-[13.5px]">/ (root)</span>
          <Caret />
        </Button>
        <Button className="ml-3 w-16 justify-center text-[#8c959f]">Save</Button>
      </div>
      <h3 className="mt-[17px] h-[21px] text-[13.1px] leading-[21px] font-semibold">Theme Chooser</h3>
      <p className="h-[21px] text-[13.31px] leading-[21px]">
        Select a theme to publish your site with a Jekyll theme. <span className="text-[12.95px] text-[#0969da]">Learn more</span>.
      </p>
      <Button className="mt-[7px] w-[136px] justify-center">Choose a theme</Button>
      <h3 className="mt-[23px] h-[21px] leading-[21px] font-semibold">Custom domain</h3>
    </main>
  );
}

function Scrollbar() {
  return (
    <div className="flex w-[17px] shrink-0 flex-col items-center bg-[#f1f1f1] py-[7px]">
      <Caret className="rotate-180 text-[#a3a3a3]" />
      <div className="mt-[6px] h-[342px] w-[13px] bg-[#c1c1c1]" />
      <Caret className="mt-auto text-[#505050]" />
    </div>
  );
}

function TaskApp({ className = "", children }) {
  return <div className={"relative flex w-[42px] items-center justify-center " + className}>{children}</div>;
}

const Underline = () => <span className="absolute inset-x-[4.5px] bottom-0 h-0.5 bg-[#76b9ed]" />;

function TaskApps() {
  return (
    <>
      <div className="flex w-[50px] items-center justify-center">
        <svg viewBox="0 0 16 16" className="size-4" fill="none" stroke="#fff" strokeWidth="1.200">
          <path d="M.6 0v2.500h10.800V0M.6 16v-2.500h10.800V16M.6 5h10.800v6H.6zM14.500 1v3M14.500 9v6" />
          <path d="M13 6h3" strokeWidth="3" />
        </svg>
      </div>
      <TaskApp>
        <svg className="absolute size-0">
          <linearGradient id="edge" x1="0" y1="1" x2="1" y2="0"><stop offset="0" stopColor="#1277d4" /><stop offset=".55" stopColor="#2bb5d8" /><stop offset="1" stopColor="#5fdc5f" /></linearGradient>
          <linearGradient id="fox" x1="0.8" y1="0" x2="0.3" y2="1"><stop offset="0" stopColor="#ffd83a" /><stop offset=".5" stopColor="#ff8a22" /><stop offset="1" stopColor="#f0305a" /></linearGradient>
        </svg>
        <span className="absolute size-4 rounded-full bg-[#1464b4]" />
        <FaEdge className="relative size-6 fill-[url(#edge)]" />
      </TaskApp>
      <TaskApp>
        <svg viewBox="0 0 22 19" className="h-[19px] w-[22px]">
          <path fill="#e8a317" d="M0 1h8l2 2h-10z" /><path fill="#fcd462" d="M0 3h22v15H0z" />
          <path fill="#3f9bdc" d="M4 11h14v8h-3.500v-4h-7v4H4z" />
        </svg>
        <Underline />
      </TaskApp>
      <TaskApp>
        <FaInternetExplorer className="size-[22px] text-[#6fd0f6]" />
        <svg viewBox="0 0 24 24" className="absolute size-6" fill="none" stroke="#f0c030" strokeWidth="1.700"><path d="M4 22Q0 22 3 15 9 3 18 1.500q5-.5 3.500 5" /></svg>
      </TaskApp>
      <TaskApp>
        <svg viewBox="0 0 21 16" className="h-4 w-[21px]">
          <rect width="21" height="16" rx="1" fill="#5cb8e8" /><path fill="#a8dcf5" d="M1 1h19v14H1z" />
          <circle cx="6.500" cy="6.500" r="3.800" fill="#2b88c8" /><path d="M6.500 6.500V2.700a3.800 3.800 0 0 1 3.800 3.800z" fill="#f5a030" />
          <path stroke="#2272b5" d="M12 4.500h6M12 7.500h6M12 10.500h6M3 12.500h7M14 3v9" />
        </svg>
      </TaskApp>
      <TaskApp>
        <svg viewBox="0 0 24 21" className="h-[21px] w-6">
          <path fill="#41a5ee" d="M6 0h18v5.500H6z" /><path fill="#2b7cd3" d="M6 5.500h18v5H6z" /><path fill="#185abd" d="M6 10.500h18v5H6z" /><path fill="#103f91" d="M6 15.500h18V21H6z" />
          <rect y="5" width="12" height="12" rx="1" fill="#185abd" />
        </svg>
        <span className="absolute left-[10px] text-[9px] font-bold text-white">W</span>
      </TaskApp>
      <TaskApp>
        <svg viewBox="0 0 24 22" className="h-[22px] w-6">
          <path fill="#0f5fae" d="M0 9 12 0l12 9v13H0z" /><path fill="#fff" d="M2 7h20v5l-10 5-10-5z" /><path fill="#1a90e0" d="m0 8 12 8.500L24 8v14H0z" />
        </svg>
        <span className="absolute right-0 bottom-[4px] flex size-[17px] items-center justify-center rounded-full border border-[#a0a0a0] bg-[#333a40] text-[10.5px] font-semibold text-white">8</span>
      </TaskApp>
      <TaskApp className="bg-[#6e6f6f]">
        <svg viewBox="0 0 24 24" className="-ml-1 size-[23px]">
          <path fill="#db4437" d="M12 12 1.600 6A12 12 0 0 1 22.400 6z" /><path fill="#0f9d58" d="M12 12 6.500 22.600A12 12 0 0 1 1.600 6z" /><path fill="#ffcd40" d="M12 12V6h10.400A12 12 0 0 1 11 24z" />
          <circle cx="12" cy="12" r="5.500" fill="#fff" /><circle cx="12" cy="12" r="4.300" fill="#4285f4" />
        </svg>
        <span className="absolute right-[4px] bottom-[5px] flex size-[16px] items-center justify-center rounded-full bg-[#f4511e] text-[9.5px] text-white">P</span>
        <span className="absolute inset-x-0 bottom-0 h-0.5 bg-[#76b9ed]" />
      </TaskApp>
      <TaskApp>
        <svg viewBox="0 0 24 24" className="size-6">
          <path d="M7 5V2h10v3" fill="none" stroke="#1b9de2" strokeWidth="2" /><rect y="4.500" width="24" height="19" rx="2" fill="#f5f5f5" />
          <path fill="#f25022" d="M7 9h4.500v4.500H7z" /><path fill="#7fba00" d="M12.500 9H17v4.500h-4.500z" /><path fill="#00a4ef" d="M7 14.500h4.500V19H7z" /><path fill="#ffb900" d="M12.500 14.500H17V19h-4.500z" />
        </svg>
      </TaskApp>
      <TaskApp>
        <svg viewBox="0 0 24 22" className="h-[22px] w-6">
          <circle cx="20" cy="5" r="2.600" fill="#5059c9" /><path fill="#5059c9" d="M16 8.500h8V15q-1 4-5 4z" /><circle cx="13" cy="4" r="3.700" fill="#7b83eb" /><path fill="#7b83eb" d="M7 8.500h11.500V16q-1 6-6 6-5-.5-5.500-6z" />
          <rect y="5.500" width="12" height="12" rx="1" fill="#4b53bc" />
        </svg>
        <span className="absolute left-[12px] text-[9.5px] font-bold text-white">T</span>
      </TaskApp>
      <TaskApp>
        <svg viewBox="0 0 22 22" className="size-[22px]" fill="#0fa4e8"><circle cx="11" cy="11" r="9.600" /><circle cx="6.300" cy="6.300" r="5.700" /><circle cx="15.700" cy="15.700" r="5.700" /></svg>
        <span className="absolute text-[15px] font-bold text-white">S</span>
      </TaskApp>
      <TaskApp>
        <span className="absolute size-3 rounded-full bg-[#7a3bd0]" />
        <FaFirefoxBrowser className="relative size-[23px] fill-[url(#fox)]" />
      </TaskApp>
      <TaskApp>
        <span className="flex size-[23px] items-center justify-center rounded-full bg-white"><SlackLogo /></span>
        <span className="absolute right-[3px] bottom-[5px] flex size-[16px] items-center justify-center rounded-full bg-[#cd2553] text-[9.5px] text-white">61</span>
        <Underline />
      </TaskApp>
      <TaskApp>
        <svg viewBox="0 0 22 22" className="size-[22px]"><path fill="#2f8fe8" d="M0 0h22v22H0z" /><path fill="#123d78" d="m0 15 8-8 14 14v1H0z" /><path fill="#1b58a8" d="m12 15 4-4 6 6v5h-4z" /><circle cx="16" cy="5" r="2" fill="#fff" /></svg>
        <Underline />
      </TaskApp>
    </>
  );
}

function SystemTray() {
  return (
    <div className="ml-auto flex w-[343px] items-center text-white">
      <svg viewBox="0 0 22 20" className="h-5 w-[22px]">
        <path fill="#fbc02d" d="M7 1q-1 6 5 8l-4 3Q1 13 1 9q5-1 6-8z" /><path fill="#d3eafa" d="M5 18.500a4.500 4.500 0 0 1 0-8.500q3-5 8-3.500 3.500 1 4 4 4.500 0 4.500 4 0 3.500-4 4z" />
      </svg>
      <span className="ml-[9px] w-[22px] pt-0.5 text-[13.2px] whitespace-nowrap">9°C</span>
      <svg viewBox="0 0 12 7" className="ml-[17px] h-[7px] w-3" fill="none" stroke="#fff" strokeWidth="1.300"><path d="m.5 6.500 5.500-6 5.500 6" /></svg>
      <svg viewBox="0 0 14 14" className="mt-0.5 ml-[13px] size-[13px]" fill="none" stroke="#fff"><path d="M1 13Q1 2 13 1.500" opacity=".45" /><path d="M4 13Q4 5 13 4.500M7 13q0-5 6-5.500M10 13q0-2 3-2.500" /><circle cx="12.500" cy="12.500" r=".8" fill="#fff" /></svg>
      <svg viewBox="0 0 16 14" className="ml-2 h-[14px] w-4"><path fill="#c8cace" d="M3 9.500a3 3 0 0 1 0-6Q5 0 9 1.500q4 0 4.500 5V9.500z" /><circle cx="11.500" cy="9.500" r="4.500" fill="#d92b2b" /><path d="m9.700 7.700 3.600 3.600m0-3.600-3.600 3.600" stroke="#fff" strokeWidth="1.300" /></svg>
      <svg viewBox="0 0 15 9" className="ml-[9px] h-[9px] w-[15px]" fill="none" stroke="#fff"><path d="M.5.5h12v8H.5zM14.500 3v3" /><path d="M2.500 2v5" strokeWidth="1.600" /></svg>
      <svg viewBox="0 0 16 14" className="ml-2 h-[14px] w-4" fill="none" stroke="#fff"><path d="M.5 4.500H3L6 1.500v11L3 9.500H.5zM8.500 5q1.500 2 0 4" /><path d="M10.500 3q3 4 0 8M12.500 1q5 6 0 12" opacity=".5" /></svg>
      <span className="ml-[10px] w-6 text-[11.3px]">ENG</span>
      <div className="ml-[9px] flex w-[60px] flex-col items-center text-[10.9px] leading-[18px]">
        <span className="text-[10.7px]">20:41</span>
        <span>21/03/2022</span>
      </div>
      <div className="relative ml-[18px]">
        <svg viewBox="0 0 16 15" className="h-[15px] w-4"><path fill="#fff" d="M0 0h16v12H7l-3 3v-3H0z" /><path stroke="#1b2740" strokeWidth="1.200" d="M3 3.500h10M3 6h10M3 8.500h10" /></svg>
        <span className="absolute -right-2 -bottom-2 flex size-[17px] items-center justify-center rounded-full border border-[#8a8f98] bg-[#2a303a] text-[10.5px] font-semibold">9</span>
      </div>
      <span className="mr-1 ml-auto h-10 w-px bg-[#5b6577]" />
    </div>
  );
}

function Taskbar() {
  return (
    <footer className="flex h-10 shrink-0 bg-[linear-gradient(90deg,#183a47_0px,#2c4a50_370px,#454746_410px,#444_880px,#3a3d40_950px,#22303f_1010px,#1b2d40_1060px,#1a2742_1250px,#182239_1366px)]">
      <div className="flex w-12 items-center justify-center">
        <svg viewBox="0 0 16 16" className="size-4 fill-white"><path d="M0 2.300 6.500 1.400v6.200H0zM7.500 1.200 16 0v7.600H7.500zM0 8.500h6.500v6.200L0 13.800zM7.500 8.500H16V16l-8.500-1.200z" /></svg>
      </div>
      <div className="flex w-[344px] items-center border border-[#c4c4c4] bg-[#f2f2f2] pl-3">
        <svg viewBox="0 0 16 16" className="size-4" fill="none" stroke="#222" strokeWidth="1.300"><circle cx="10" cy="6" r="5" /><path d="M6.400 9.600.5 15.500" /></svg>
        <span className="ml-[11px] pt-0.5 text-[13.9px] text-[#333]">Type here to search</span>
      </div>
      <TaskApps />
      <SystemTray />
    </footer>
  );
}

export default function App() {
  return (
    <div className="flex h-[768px] w-[1366px] flex-col overflow-hidden bg-white font-['Open_Sans',sans-serif]">
      <TabStrip />
      <Toolbar />
      <BookmarkBar />
      <div className="flex min-h-0 flex-1">
        <div className="flex w-[1349px] flex-col overflow-hidden">
          <GlobalHeader />
          <RepoHeader />
          <div className="flex min-h-0 flex-1 gap-6 overflow-hidden pl-[67px]">
            <Sidebar />
            <PagesSettings />
          </div>
        </div>
        <Scrollbar />
      </div>
      <Taskbar />
    </div>
  );
}
